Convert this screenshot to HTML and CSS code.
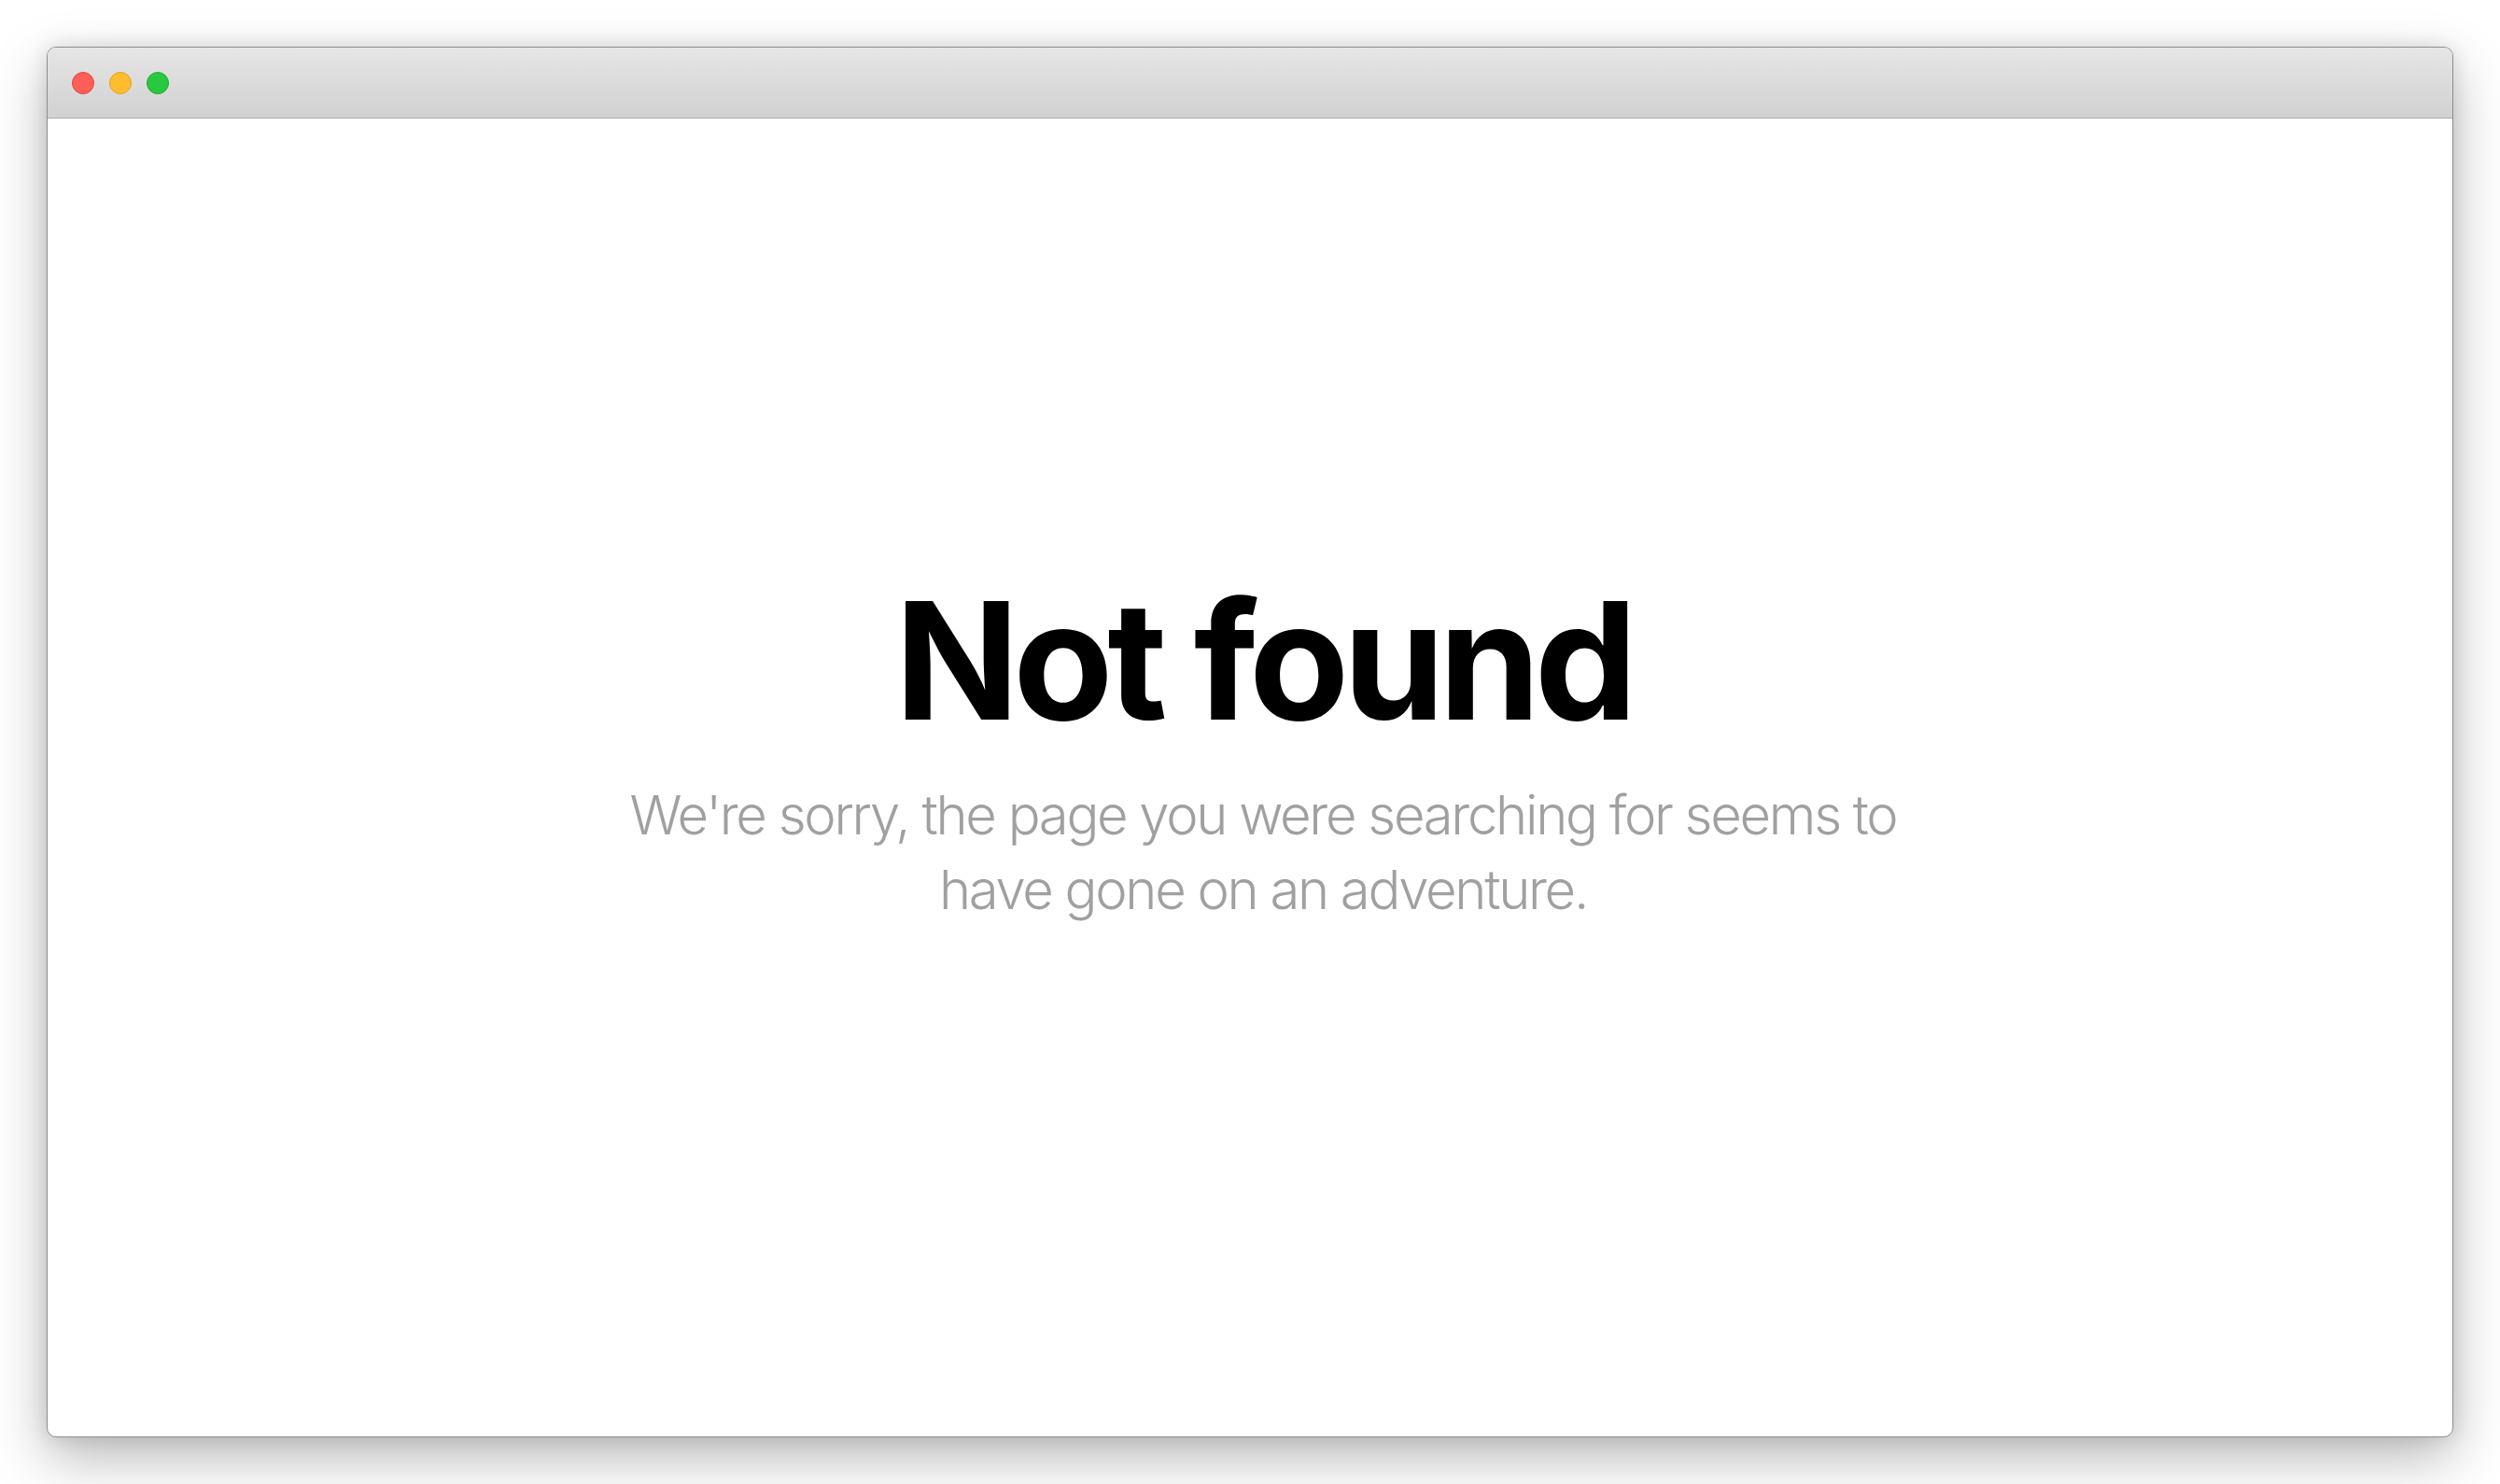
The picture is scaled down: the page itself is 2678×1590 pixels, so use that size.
FILE: index.html
```html
<!DOCTYPE html>
<html lang="en">
<head>
<meta charset="utf-8">
<title>Not found</title>
<link rel="stylesheet" href="styles.css">
</head>
<body>
  <div class="window">
    <div class="titlebar">
      <span class="light red"></span>
      <span class="light yellow"></span>
      <span class="light green"></span>
    </div>
    <main class="content">
      <h1 class="title">Not found</h1>
      <p class="message">We're sorry, the page you were searching for seems to<br>have gone on an adventure.</p>
    </main>
  </div>
</body>
</html>
```

FILE: styles.css
```css
html, body {
  margin: 0;
  padding: 0;
  background: #ffffff;
}
body {
  padding: 50px 50px 51px 50px;
  box-sizing: border-box;
  height: 1590px;
  font-family: Inter, "Noto Sans", "Liberation Sans", sans-serif;
}
.window {
  height: 1490px;
  border: 1px solid #8e8e8e;
  border-radius: 10px;
  background: #ffffff;
  box-shadow: 0 22px 60px rgba(0, 0, 0, 0.28), 0 0 20px rgba(0, 0, 0, 0.12);
  display: flex;
  flex-direction: column;
  overflow: hidden;
  box-sizing: border-box;
}
.titlebar {
  height: 75px;
  flex: none;
  background: linear-gradient(#e6e6e6, #d1d1d1);
  border-bottom: 1px solid #ababab;
  display: flex;
  align-items: center;
  gap: 16px;
  padding-left: 26px;
}
.light {
  width: 22px;
  height: 22px;
  border-radius: 50%;
  border: 1px solid transparent;
}
.red { background: #ff5f57; border-color: #e2463f; }
.yellow { background: #febc2e; border-color: #dfa123; }
.green { background: #28c840; border-color: #1dad2b; }
.content {
  flex: 1;
  display: flex;
  flex-direction: column;
  align-items: center;
  justify-content: center;
  padding-left: 28px;
  padding-bottom: 54px;
  text-align: center;
}
.title {
  margin: 0;
  font-size: 175px;
  font-weight: 700;
  line-height: 1;
  letter-spacing: -6.5px;
  color: #000000;
}
.message {
  margin: 38px 0 0;
  font-size: 58px;
  font-weight: 300;
  line-height: 80px;
  color: #a0a0a0;
  letter-spacing: -2.3px;
}
```
